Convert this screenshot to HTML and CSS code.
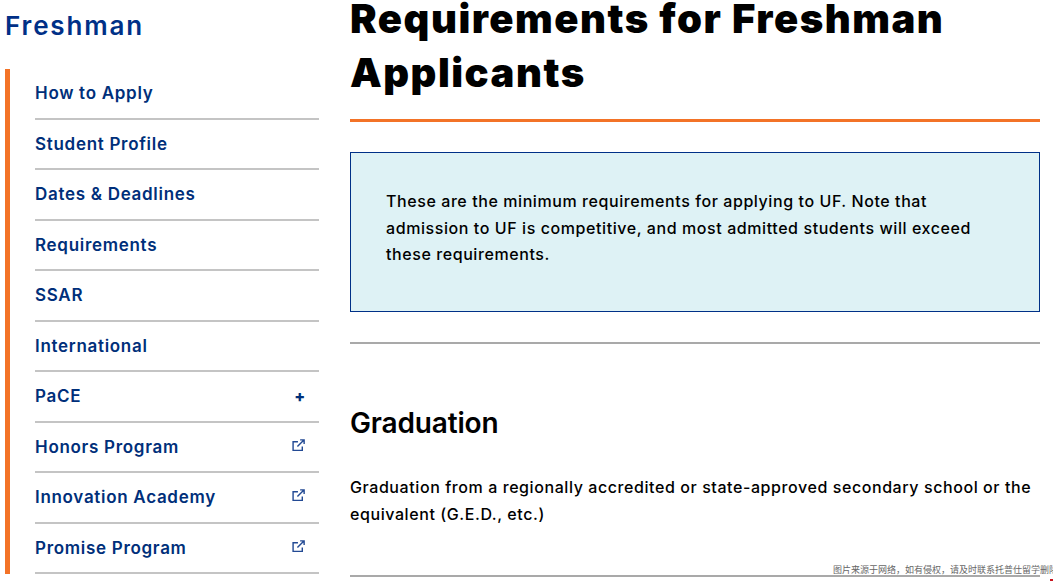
FILE: index.html
```html
<!DOCTYPE html>
<html lang="en">
<head>
<meta charset="utf-8">
<title>Requirements for Freshman Applicants</title>
<link rel="stylesheet" href="styles.css">
</head>
<body>
<div class="page">
  <aside class="sidebar">
    <h2 class="side-title">Freshman</h2>
    <ul class="side-nav">
      <li class="nav-item"><a>How to Apply</a></li>
      <li class="nav-item"><a>Student Profile</a></li>
      <li class="nav-item"><a>Dates &amp; Deadlines</a></li>
      <li class="nav-item"><a>Requirements</a></li>
      <li class="nav-item"><a>SSAR</a></li>
      <li class="nav-item"><a>International</a></li>
      <li class="nav-item"><a>PaCE</a><span class="plus">+</span></li>
      <li class="nav-item"><a>Honors Program</a><svg class="ext" viewBox="0 0 12 12"><path d="M9.500 7v3.500h-8.500v-8h4.500M5 7l6-6M7.500 .8h3.700v3.700"/></svg></li>
      <li class="nav-item"><a>Innovation Academy</a><svg class="ext" viewBox="0 0 12 12"><path d="M9.500 7v3.500h-8.500v-8h4.500M5 7l6-6M7.500 .8h3.700v3.700"/></svg></li>
      <li class="nav-item"><a>Promise Program</a><svg class="ext" viewBox="0 0 12 12"><path d="M9.500 7v3.500h-8.500v-8h4.500M5 7l6-6M7.500 .8h3.700v3.700"/></svg></li>
    </ul>
  </aside>
  <main class="content">
    <h1 class="title">Requirements for Freshman Applicants</h1>
    <div class="callout">
      <p>These are the minimum requirements for applying to UF. Note that admission to UF is competitive, and most admitted students will exceed these requirements.</p>
    </div>
    <section class="block">
      <h2 class="block-title">Graduation</h2>
      <p class="block-text">Graduation from a regionally accredited or state-approved secondary school or the equivalent (G.E.D., etc.)</p>
    </section>
    <hr class="end-rule">
  </main>
</div>
<div class="watermark">图片来源于网络，如有侵权，请及时联系托普仕留学删除</div>
<div class="corner-mark"></div>
</body>
</html>
```
FILE: styles.css
```css
html, body { margin: 0; padding: 0; height: 581px; overflow: hidden; background: #fff; }
body { font-family: "Inter", "Liberation Sans", sans-serif; color: #000; }
.page { display: flex; align-items: flex-start; }
.sidebar { width: 319px; padding-left: 5px; flex: none; box-sizing: border-box; }
.side-title { margin: 11px 0 0; font-size: 26px; line-height: 30px; font-weight: 600; color: #003087; letter-spacing: 1.850px; }
.side-nav { list-style: none; margin: 28px 0 0; padding: 0 0 0 25px; border-left: 5px solid #f37327; }
.nav-item { display: flex; justify-content: space-between; align-items: center; height: 48.500px; border-bottom: 2px solid #c4c4c4; padding-right: 14px; font-size: 17px; font-weight: 600; color: #002f7a; letter-spacing: .7px; }
.plus { font-weight: 800; font-size: 16px; margin-right: -1px; }
.ext { width: 13px; height: 13px; margin-top: -3px; fill: none; stroke: #234a94; stroke-width: 1.300; }
.content { width: 690px; margin-left: 31px; flex: none; }
.title { margin: -8px 0 0; padding-bottom: 19px; border-bottom: 3px solid #f37327; font-size: 40px; line-height: 54px; font-weight: 900; letter-spacing: 1.500px; }
.callout { margin-top: 30px; height: 160px; box-sizing: border-box; padding: 35px; background: #def2f5; border: 1px solid #003087; }
.callout p, .block-text { margin: 0; font-size: 16px; line-height: 26.500px; font-weight: 500; letter-spacing: .58px; }
.block { margin-top: 30px; border-top: 2px solid #a9a9a9; }
.block-title { margin: 61px 0 0; font-size: 28px; line-height: 36px; font-weight: 600; letter-spacing: -.15px; }
.block-text { margin-top: 33px; }
.end-rule { margin: 48px 0 0; border: 0; border-top: 2px solid #a9a9a9; }
.watermark { position: absolute; right: 0; top: 563px; width: 220px; white-space: nowrap; overflow: hidden; font-family: "Noto Sans CJK SC", sans-serif; font-size: 9px; line-height: 14px; color: #666; }
.corner-mark { position: absolute; left: 1050px; top: 579px; width: 3px; height: 2px; background: #c8141e; }
```
